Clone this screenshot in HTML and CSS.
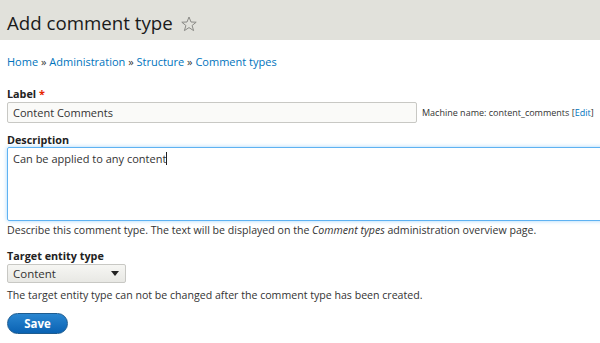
FILE: index.html
```html
<!DOCTYPE html>
<html>
<head>
<meta charset="utf-8">
<link rel="stylesheet" href="styles.css">
</head>
<body>
<header class="page-header">
  <h1 class="title">Add comment type</h1>
  <svg class="star" width="16" height="16" viewBox="0 0 16 16"><polygon points="8,1 10,6 15.2,6.2 11.1,9.5 12.6,14.6 8,11.6 3.4,14.6 4.9,9.5 0.8,6.2 6,6" fill="none" stroke="#8a8a86" stroke-width="1"/></svg>
</header>
<main class="content">
  <nav class="breadcrumb"><a href="#">Home</a> » <a href="#">Administration</a> » <a href="#">Structure</a> » <a href="#">Comment types</a></nav>
  <div class="field field-label">
    <label class="label">Label <span class="req">*</span></label>
    <div class="row">
      <div class="input">Content Comments</div>
      <span class="machine">Machine name: content_comments [<a href="#">Edit</a>]</span>
    </div>
  </div>
  <div class="field field-desc">
    <label class="label">Description</label>
    <div class="textarea">Can be applied to any content<span class="caret"></span></div>
    <div class="help">Describe this comment type. The text will be displayed on the <em>Comment types</em> administration overview page.</div>
  </div>
  <div class="field field-target">
    <label class="label">Target entity type</label>
    <div class="select"><span>Content</span><span class="arrow"></span></div>
    <div class="help help2">The target entity type can not be changed after the comment type has been created.</div>
  </div>
  <button class="save">Save</button>
</main>
</body>
</html>
```
FILE: styles.css
```css
html, body { margin: 0; padding: 0; background: #fff; }
body { font-family: "Open Sans", sans-serif; color: #333; font-size: 11px; overflow: hidden; }
a { color: #0074bd; text-decoration: none; }
.page-header { background: #e1e1db; height: 40px; display: flex; align-items: center; padding: 6px 7px 0; gap: 8px; box-sizing: border-box; }
.title { margin: 0; font-size: 18.7px; font-weight: 500; color: #1a1a1a; line-height: 24px; }
.star { margin-top: 1px; }
.content { padding: 0 7px; }
.breadcrumb { font-size: 11px; margin-top: 15px; height: 14px; line-height: 14px; }
.label { display: block; font-weight: bold; font-size: 10.8px; color: #222; line-height: 14px; margin-bottom: 1px; }
.field-label { margin-top: 18px; }
.field-desc { margin-top: 10px; }
.field-desc .label { margin-bottom: 0; }
.field-target { margin-top: 12px; }
.req { color: #e62600; }
.row { display: flex; align-items: center; gap: 5px; }
.input { flex: 0 0 auto; width: 410px; height: 21px; box-sizing: border-box; border: 1px solid #c8c8c4; border-radius: 2px; background: #fafaf8; padding: 0 5px; line-height: 19px; font-size: 11px; color: #333; }
.machine { font-size: 9px; color: #333; white-space: nowrap; }
.textarea { width: 600px; height: 74px; box-sizing: border-box; border: 1px solid #5fb2f2; box-shadow: 0 0 4px #a6d6fb; border-radius: 2px; padding: 3px 5px; font-size: 11px; line-height: 16px; }
.caret { display: inline-block; width: 1px; height: 13px; background: #222; vertical-align: -2px; }
.help { font-size: 10.6px; color: #333; line-height: 14px; margin-top: 2px; }
.help2 { margin-top: 5px; }
.select { width: 119px; height: 19px; box-sizing: border-box; border: 1px solid #c8c8c4; border-radius: 2px; background: linear-gradient(#f6f6f3, #e8e8e4); display: flex; align-items: center; justify-content: space-between; padding: 0 6px 0 5px; font-size: 11.5px; }
.arrow { width: 0; height: 0; border-left: 4px solid transparent; border-right: 4px solid transparent; border-top: 5px solid #222; }
.save { display: block; margin-top: 11px; width: 61px; height: 21px; border: 1px solid #1e5c90; border-radius: 11px; background: linear-gradient(#2a86d0, #0a62b3); color: #fff; font-family: "Open Sans", sans-serif; font-weight: bold; font-size: 11.5px; padding: 0; }
```
